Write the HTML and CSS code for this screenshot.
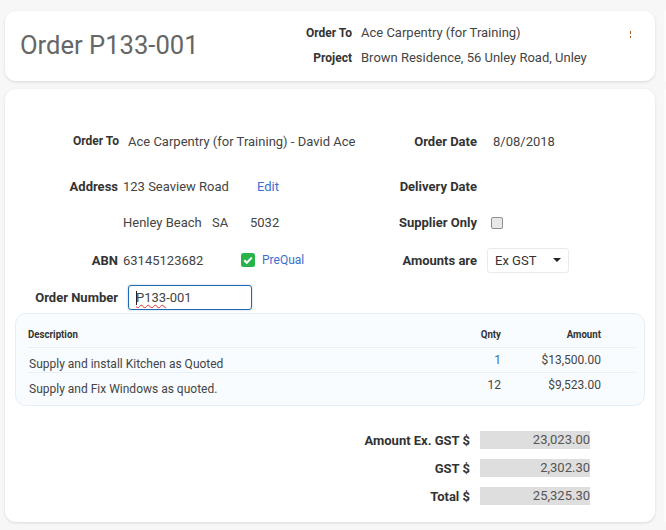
FILE: index.html
```html
<!DOCTYPE html>
<html lang="en">
<head>
<meta charset="utf-8">
<title>Order P133-001</title>
<link rel="stylesheet" href="styles.css">
</head>
<body>
<header class="card head">
  <h1 class="title">Order P133-001</h1>
  <dl class="summary">
    <div class="summary-row"><dt>Order To</dt><dd>Ace Carpentry (for Training)</dd></div>
    <div class="summary-row"><dt>Project</dt><dd>Brown Residence, 56 Unley Road, Unley</dd></div>
  </dl>
  <svg class="kebab" width="1" height="7" viewBox="0 0 1 7"><rect width="1" height="3"/><rect y="5" width="1" height="2"/></svg>
</header>
<main class="card body">
  <section class="form">
    <div class="row row-to">
      <div class="left"><span class="label label-to">Order To</span><span class="val val-to">Ace Carpentry (for Training) - David Ace</span></div>
      <div class="right"><span class="label rlabel">Order Date</span><span class="val val-date">8/08/2018</span></div>
    </div>
    <div class="row row-addr">
      <div class="left"><span class="label">Address</span><span class="val val-addr">123 Seaview Road</span><a class="link edit">Edit</a></div>
      <div class="right"><span class="label rlabel">Delivery Date</span></div>
    </div>
    <div class="row row-city">
      <div class="left"><span class="label"></span><span class="val city">Henley Beach</span><span class="val state">SA</span><span class="val">5032</span></div>
      <div class="right"><span class="label rlabel">Supplier Only</span><span class="checkbox"></span></div>
    </div>
    <div class="row row-abn">
      <div class="left"><span class="label">ABN</span><span class="val val-abn">63145123682</span>
        <svg class="check" width="14" height="14" viewBox="0 0 14 14"><rect width="14" height="14" rx="2.5" fill="#28b24b"/><path d="M3.2 7.2l2.6 2.6 5-5.2" fill="none" stroke="#fff" stroke-width="2"/></svg>
        <a class="link prequal">PreQual</a></div>
      <div class="right"><span class="label rlabel">Amounts are</span><span class="select">Ex GST<i class="caret"></i></span></div>
    </div>
    <div class="row row-num">
      <div class="left"><span class="label">Order Number</span><span class="input"><span class="cursor"></span><span class="squiggle">P133</span>-001</span></div>
    </div>
  </section>
  <section class="lines">
    <div class="line line-head"><span class="desc">Description</span><span class="qty">Qnty</span><span class="amt">Amount</span></div>
    <div class="line"><span class="desc">Supply and install Kitchen as Quoted</span><span class="qty qty-link">1</span><span class="amt">$13,500.00</span></div>
    <div class="line line-last"><span class="desc">Supply and Fix Windows as quoted.</span><span class="qty">12</span><span class="amt">$9,523.00</span></div>
  </section>
  <section class="totals">
    <div class="total"><span class="total-label">Amount Ex. GST $</span><span class="total-val">23,023.00</span></div>
    <div class="total"><span class="total-label">GST $</span><span class="total-val">2,302.30</span></div>
    <div class="total"><span class="total-label">Total $</span><span class="total-val">25,325.30</span></div>
  </section>
</main>
</body>
</html>
```
FILE: styles.css
```css
* { box-sizing: border-box; }
html, body { margin: 0; height: 530px; overflow: hidden; }
body {
  background: #f7f7f7;
  padding: 11px 11px 0 5px;
  font-family: Roboto, "Liberation Sans", sans-serif;
  font-size: 13px;
  color: #444;
}
.card {
  position: relative;
  background: #fff;
  border-radius: 11px;
  box-shadow: 0 1px 3px rgba(0,0,0,.12);
}
.card::after {
  content: "";
  position: absolute;
  top: 0;
  bottom: 0;
  left: 659px;
  width: 2px;
  background: #fbfbfb;
}
.head {
  height: 70px;
  display: flex;
  align-items: center;
  padding: 0 24px 0 15px;
  margin-bottom: 8px;
}
.title {
  margin: 0 0 2px;
  width: 262px;
  font-size: 25.6px;
  font-weight: 400;
  line-height: 32px;
  color: #666;
}
.summary { margin: 0 0 2px; flex: 1; display: flex; flex-direction: column; gap: 6px; }
.summary-row { display: flex; height: 19px; align-items: center; }
.summary dt { width: 70px; text-align: right; font-weight: 700; font-size: 12px; color: #333; }
.summary dd { margin: 0 0 0 9px; color: #444; }
.kebab { fill: #a8581a; margin-bottom: 24px; }
.body { height: 433px; padding: 0 10px; }
.form { padding-top: 33px; }
.row { display: flex; align-items: center; height: 38px; }
.row-addr { margin-top: 7px; }
.row-city { height: 34px; }
.row-abn { height: 42px; }
.row-num { height: 32px; }
.left { width: 331px; display: flex; align-items: center; flex: none; }
.right { display: flex; align-items: center; flex: none; }
.label { width: 103px; text-align: right; font-weight: 700; color: #333; flex: none; }
.label-to { width: 104px; font-size: 12px; }
.rlabel { width: 131px; }
.val { margin-left: 5px; }
.val-to { margin-left: 9px; white-space: nowrap; }
.val-date { margin-left: 16px; }
.val-addr { width: 134px; flex: none; }
.city { width: 84px; flex: none; }
.state { width: 33px; flex: none; }
.val-abn { width: 118px; flex: none; }
.link { color: #3a6fd0; }
.prequal { font-size: 12px; }
.check { margin-right: 7px; flex: none; }
.checkbox {
  width: 12px; height: 12px; margin: 1px 0 0 14px;
  background: #e8e8e8; border: 1px solid #8f8f8f; border-radius: 2px;
}
.select {
  width: 82px; height: 25px; margin-left: 10px; padding: 0 6px 0 7px;
  display: flex; align-items: center; justify-content: space-between;
  border: 1px solid #eaeaea; border-radius: 3px; color: #333;
}
.caret { width: 0; height: 0; border: 4px solid transparent; border-top: 4px solid #222; border-bottom: 0; margin-right: 1px; }
.input {
  width: 124px; height: 25px; margin-left: 10px; padding: 0 7px;
  display: flex; align-items: center; position: relative;
  border: 1px solid #1f68b4; border-radius: 3px; color: #444;
  box-shadow: 0 0 2px rgba(30,90,160,.4);
}
.cursor { position: absolute; left: 7px; top: 5px; width: 1px; height: 14px; background: #222; }
.squiggle { text-decoration: underline wavy #e0302a 1px; text-underline-offset: 2px; }
.lines {
  height: 93px;
  padding: 6px 9px 0 12px;
  background: #f8fcff;
  border: 1px solid #e3eef8;
  border-radius: 11px;
  font-size: 12px;
}
.line { display: flex; align-items: center; height: 25px; border-top: 1px solid #e9f0f5; }
.line-head { height: 27px; padding-top: 2px; border-top: 0; font-size: 11px; font-weight: 700; color: #333; }
.line-head span { transform: scaleX(.88); transform-origin: right center; }
.line-head .desc { transform-origin: left center; padding: 0; }
.desc { flex: 1; padding: 7px 0 0 1px; }
.qty { width: 60px; text-align: right; }
.qty-link { color: #3a6fa8; }
.amt { width: 100px; margin-right: 34px; text-align: right; }
.totals { margin-top: 25px; padding-left: 335px; display: flex; flex-direction: column; gap: 10px; }
.total { display: flex; align-items: center; height: 18px; }
.total-label { width: 120px; text-align: right; font-weight: 700; color: #333; flex: none; }
.total-val { width: 110px; height: 18px; margin-left: 10px; text-align: right; background: #dedede; line-height: 18px; color: #555; }
```
